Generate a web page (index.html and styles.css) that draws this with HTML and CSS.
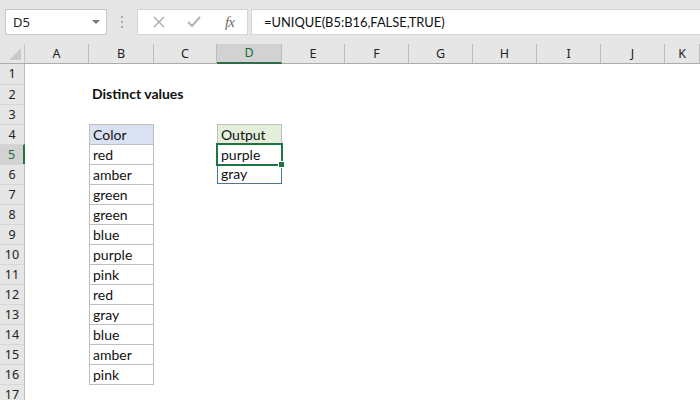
FILE: index.html
```html
<!DOCTYPE html>
<html>
<head>
<meta charset="utf-8">
<link rel="stylesheet" href="styles.css">
</head>
<body>
<div class="toolbar">
  <div class="namebox"><span>D5</span><span class="caret"></span></div>
  <div class="dots"><i></i><i></i><i></i></div>
  <div class="fxbtns">
    <svg class="ico" width="14" height="14" viewBox="0 0 14 14"><path d="M2 2 L12 12 M12 2 L2 12" stroke="#a8a8a8" stroke-width="1.4" fill="none"/></svg>
    <svg class="ico" width="16" height="14" viewBox="0 0 16 14"><path d="M2 7 L6 11 L14 2" stroke="#b4b4b4" stroke-width="2" fill="none"/></svg>
    <span class="fx">fx</span>
  </div>
  <div class="formula">=UNIQUE(B5:B16,FALSE,TRUE)</div>
</div>
<div class="sheet">
  <div class="colhead">
    <div class="corner"><span class="tri"></span></div>
    <div class="ch">A</div><div class="ch">B</div><div class="ch">C</div><div class="ch sel">D</div><div class="ch">E</div><div class="ch">F</div><div class="ch">G</div><div class="ch">H</div><div class="ch">I</div><div class="ch">J</div><div class="ch">K</div>
  </div>
  <div class="row"><div class="rh">1</div></div>
  <div class="row"><div class="rh">2</div><div></div><div class="c title">Distinct values</div></div>
  <div class="row"><div class="rh">3</div></div>
  <div class="row"><div class="rh">4</div><div></div><div class="c b hb">Color</div><div></div><div class="c d4">Output</div></div>
  <div class="row"><div class="rh sel">5</div><div></div><div class="c b">red</div><div></div><div class="c spill top">purple</div></div>
  <div class="row"><div class="rh">6</div><div></div><div class="c b">amber</div><div></div><div class="c spill bottom">gray</div></div>
  <div class="row"><div class="rh">7</div><div></div><div class="c b">green</div></div>
  <div class="row"><div class="rh">8</div><div></div><div class="c b">green</div></div>
  <div class="row"><div class="rh">9</div><div></div><div class="c b">blue</div></div>
  <div class="row"><div class="rh">10</div><div></div><div class="c b">purple</div></div>
  <div class="row"><div class="rh">11</div><div></div><div class="c b">pink</div></div>
  <div class="row"><div class="rh">12</div><div></div><div class="c b">red</div></div>
  <div class="row"><div class="rh">13</div><div></div><div class="c b">gray</div></div>
  <div class="row"><div class="rh">14</div><div></div><div class="c b">blue</div></div>
  <div class="row"><div class="rh">15</div><div></div><div class="c b">amber</div></div>
  <div class="row"><div class="rh">16</div><div></div><div class="c b last">pink</div></div>
  <div class="row"><div class="rh">17</div></div>
  <div class="selbox"><span class="handle"></span></div>
</div>
</body>
</html>
```
FILE: styles.css
```css
html, body {
  margin: 0;
  padding: 0;
}
body {
  width: 700px;
  height: 400px;
  overflow: hidden;
  background: #fff;
  font-family: Lato, "Liberation Sans", sans-serif;
  position: relative;
}
.toolbar {
  height: 44px;
  background: #e6e6e6;
  display: flex;
  align-items: flex-start;
  padding-top: 9px;
  box-sizing: border-box;
}
.namebox {
  margin-left: 5px;
  width: 102px;
  height: 26px;
  box-sizing: border-box;
  border: 1px solid #c6c6c6;
  background: #fff;
  display: flex;
  align-items: center;
  justify-content: space-between;
  padding: 0 6px 0 7px;
  font-family: "Noto Sans", sans-serif;
  font-size: 13px;
  color: #222;
}
.caret {
  width: 0;
  height: 0;
  border-left: 4px solid transparent;
  border-right: 4px solid transparent;
  border-top: 4px solid #777;
}
.dots {
  margin-left: 14px;
  width: 2px;
  height: 26px;
  display: flex;
  flex-direction: column;
  justify-content: center;
  gap: 3px;
}
.dots i {
  display: block;
  width: 2px;
  height: 2px;
  background: #a8a8a8;
}
.fxbtns {
  margin-left: 14px;
  width: 111px;
  height: 26px;
  box-sizing: border-box;
  border: 1px solid #d4d4d4;
  background: #fff;
  display: flex;
  align-items: center;
  padding-left: 14px;
}
.fxbtns .ico:nth-child(2) {
  margin-left: 20px;
}
.fx {
  margin-left: 23px;
  font-family: "Liberation Serif", serif;
  font-style: italic;
  font-size: 15px;
  color: #6b6b6b;
  letter-spacing: -1px;
}
.formula {
  margin-left: 3px;
  flex: 1;
  height: 26px;
  box-sizing: border-box;
  border: 1px solid #d4d4d4;
  border-right: none;
  background: #fff;
  font-size: 12.9px;
  color: #111;
  line-height: 24px;
  padding-left: 12px;
}
.sheet {
  display: block;
}
.colhead, .row {
  display: grid;
  grid-template-columns: 25px 64px 65px 63px 65px 63px 64px 64px 64px 64px 64px 1fr;
}
.colhead {
  height: 20px;
  background: #e6e6e6;
  box-sizing: border-box;
  border-bottom: 1px solid #ababab;
}
.corner {
  position: relative;
  border-right: 1px solid #c4c4c4;
}
.tri {
  position: absolute;
  right: 3px;
  bottom: 3px;
  width: 0;
  height: 0;
  border-left: 12px solid transparent;
  border-bottom: 12px solid #c9c9c9;
}
.ch {
  border-right: 1px solid #bcbcbc;
  text-align: center;
  font-family: "Noto Sans", sans-serif;
  font-size: 12.5px;
  line-height: 19px;
  color: #222;
}
.ch.sel {
  background: #d2d2d2;
  color: #1e6b40;
  border-bottom: 2px solid #217346;
  margin-bottom: -1px;
  line-height: 18px;
}
.row {
  height: 20px;
}
.rh {
  background: #e6e6e6;
  border-top: 1px solid #d6d6d6;
  border-right: 1px solid #bcbcbc;
  text-align: center;
  font-family: "Noto Sans", sans-serif;
  font-size: 12.5px;
  line-height: 19px;
  color: #222;
}
.row:nth-child(2) .rh {
  border-top: none;
  line-height: 20px;
}
.rh.sel {
  background: #d2d2d2;
  color: #1e6b40;
  border-right: 2px solid #217346;
}
.c {
  box-sizing: border-box;
  font-size: 14px;
  line-height: 19px;
  padding-left: 3px;
  color: #111;
  white-space: nowrap;
}
.title {
  font-weight: bold;
  line-height: 20px;
}
.b {
  border-top: 1px solid #bfbfbf;
  border-left: 1px solid #bfbfbf;
  border-right: 1px solid #bfbfbf;
}
.b.last {
  border-bottom: 1px solid #bfbfbf;
}
.hb {
  background: #d9e1f2;
}
.d4 {
  background: #e2efda;
  border-top: 1px solid #bfbfbf;
  border-left: 1px solid #bfbfbf;
  border-right: 1px solid #bfbfbf;
}
.spill {
  border-left: 1px solid #4472c4;
  border-right: 1px solid #4472c4;
}
.spill.top {
  border-top: 1px solid #4472c4;
}
.spill.bottom {
  border-bottom: 1px solid #4472c4;
}
.selbox {
  position: absolute;
  left: 216px;
  top: 143px;
  width: 67px;
  height: 23px;
  box-sizing: border-box;
  border: 2px solid #217346;
}
.handle {
  position: absolute;
  right: -4px;
  bottom: -4px;
  width: 5px;
  height: 5px;
  background: #217346;
  border: 1px solid #fff;
}
```
